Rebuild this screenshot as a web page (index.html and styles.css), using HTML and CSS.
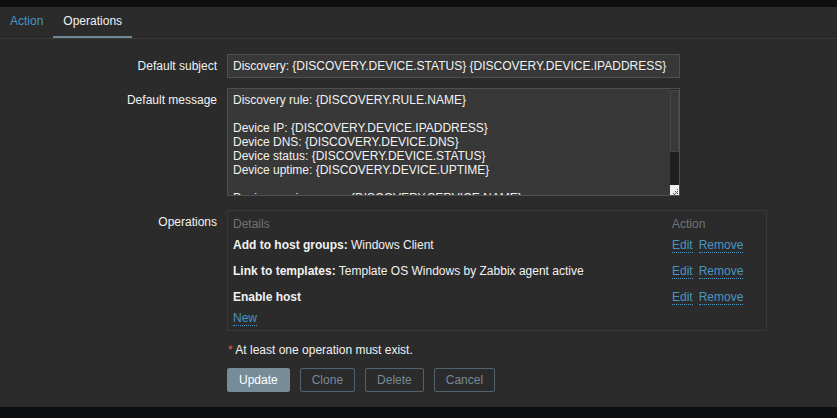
FILE: index.html
```html
<!DOCTYPE html>
<html>
<head>
<meta charset="utf-8">
<link rel="stylesheet" href="styles.css">
</head>
<body>
<div class="topband"></div>
<div class="panel">
  <div class="tabs">
    <a class="tab">Action</a>
    <a class="tab active">Operations</a>
  </div>
  <div class="form">
    <div class="label">Default subject</div>
    <div class="field f-subject"><div class="input">Discovery: {DISCOVERY.DEVICE.STATUS} {DISCOVERY.DEVICE.IPADDRESS}</div></div>

    <div class="label">Default message</div>
    <div class="field f-message">
      <div class="ta-wrap">
        <textarea class="textarea">Discovery rule: {DISCOVERY.RULE.NAME}

Device IP: {DISCOVERY.DEVICE.IPADDRESS}
Device DNS: {DISCOVERY.DEVICE.DNS}
Device status: {DISCOVERY.DEVICE.STATUS}
Device uptime: {DISCOVERY.DEVICE.UPTIME}

Device service name: {DISCOVERY.SERVICE.NAME}
Device service port: {DISCOVERY.SERVICE.PORT}
Device service status: {DISCOVERY.SERVICE.STATUS}
Device service uptime: {DISCOVERY.SERVICE.UPTIME}</textarea>
        <div class="scrollbar"><div class="thumb"></div></div>
        <div class="grip"><svg width="9" height="10" viewBox="0 0 9 10"><path d="M7 4h1v1H7zM5 6h1v1H5zM7 6h1v1H7zM3 8h1v1H3zM5 8h1v1H5zM7 8h1v1H7zM6 7h1v1H6zM4 9h1v1H4z" fill="#555"/></svg></div>
      </div>
    </div>

    <div class="label">Operations</div>
    <div class="field f-ops">
      <div class="ops">
        <div class="ops-row head"><div class="c-details">Details</div><div class="c-action">Action</div></div>
        <div class="ops-row"><div class="c-details"><b>Add to host groups:</b> Windows Client</div><div class="c-action"><a class="link edit">Edit</a><a class="link">Remove</a></div></div>
        <div class="ops-row"><div class="c-details"><b>Link to templates:</b> Template OS Windows by Zabbix agent active</div><div class="c-action"><a class="link edit">Edit</a><a class="link">Remove</a></div></div>
        <div class="ops-row"><div class="c-details"><b>Enable host</b></div><div class="c-action"><a class="link edit">Edit</a><a class="link">Remove</a></div></div>
        <div class="ops-new"><a class="link">New</a></div>
      </div>
    </div>

    <div class="label empty"></div>
    <div class="field required"><span class="star">*</span> At least one operation must exist.</div>

    <div class="label empty"></div>
    <div class="field buttons">
      <button class="btn primary">Update</button>
      <button class="btn alt">Clone</button>
      <button class="btn alt">Delete</button>
      <button class="btn alt">Cancel</button>
    </div>
  </div>
</div>
</body>
</html>
```
FILE: styles.css
```css
html, body {
  margin: 0;
  padding: 0;
  background: #0e0f10;
  font-family: "Liberation Sans", Arial, sans-serif;
  font-size: 12px;
  color: #f2f2f2;
}
.topband {
  height: 7px;
  background: #0e0f10;
}
.panel {
  background: #2b2b2b;
  padding-bottom: 15px;
}
.tabs {
  display: flex;
  border-bottom: 1px solid #383838;
  height: 31px;
}
.tab {
  padding: 0 10px;
  height: 29px;
  line-height: 29px;
  color: #4796c4;
  border-bottom: 2px solid transparent;
}
.tab.active {
  color: #f2f2f2;
  border-bottom-color: #6e8896;
}
.form {
  display: grid;
  grid-template-columns: 217px 1fr;
  column-gap: 10px;
  padding-top: 15px;
}
.label {
  text-align: right;
  line-height: 24px;
}
.label.empty {
  line-height: 0;
}
.field {
  margin-bottom: 10px;
}
.f-message {
  margin-bottom: 14px;
}
.f-ops {
  margin-bottom: 11px;
}
.input {
  box-sizing: border-box;
  width: 453px;
  height: 24px;
  line-height: 22px;
  padding: 0 5px;
  background: #383838;
  border: 1px solid #4f4f4f;
  color: #f2f2f2;
}
.ta-wrap {
  position: relative;
  width: 453px;
  height: 108px;
}
.textarea {
  display: block;
  box-sizing: border-box;
  width: 453px;
  height: 108px;
  margin: 0;
  padding: 4px 14px 4px 5px;
  background: #383838;
  border: 1px solid #4f4f4f;
  color: #f2f2f2;
  font-family: "Liberation Sans", Arial, sans-serif;
  font-size: 12px;
  line-height: 14px;
  resize: none;
  overflow: hidden;
  outline: none;
}
.scrollbar {
  position: absolute;
  right: 1px;
  top: 1px;
  bottom: 11px;
  width: 9px;
  background: #202020;
}
.thumb {
  box-sizing: border-box;
  height: 62px;
  margin-top: 1px;
  background: #383838;
  border: 1px solid #474747;
}
.grip {
  position: absolute;
  right: 1px;
  bottom: 1px;
  width: 9px;
  height: 10px;
  background: #f0f0f0;
}
.grip svg {
  display: block;
}
.ops {
  box-sizing: border-box;
  width: 540px;
  border: 1px solid #383838;
  padding: 0 0 4px 5px;
}
.ops-row {
  display: flex;
  padding: 5px 0;
  line-height: 16px;
  height: 16px;
}
.ops-row.head {
  padding: 5px 0 0;
  color: #737373;
}
.c-details {
  flex: 1;
}
.c-action {
  width: 94px;
}
.link {
  color: #4796c4;
  border-bottom: 1px dotted #4796c4;
}
.link.edit {
  margin-right: 6px;
}
.ops-new {
  line-height: 16px;
  height: 16px;
}
.required {
  line-height: 16px;
  padding-left: 1px;
}
.star {
  color: #e45959;
}
.buttons {
  display: flex;
  gap: 10px;
  margin-bottom: 0;
}
.btn {
  box-sizing: border-box;
  height: 24px;
  padding: 0 11px;
  font-family: "Liberation Sans", Arial, sans-serif;
  font-size: 12px;
  border-radius: 2px;
  border: 1px solid #768d99;
}
.btn.primary {
  background: #768d99;
  color: #ffffff;
}
.btn.alt {
  background: transparent;
  color: #768a96;
  border-color: #51636e;
}
```
